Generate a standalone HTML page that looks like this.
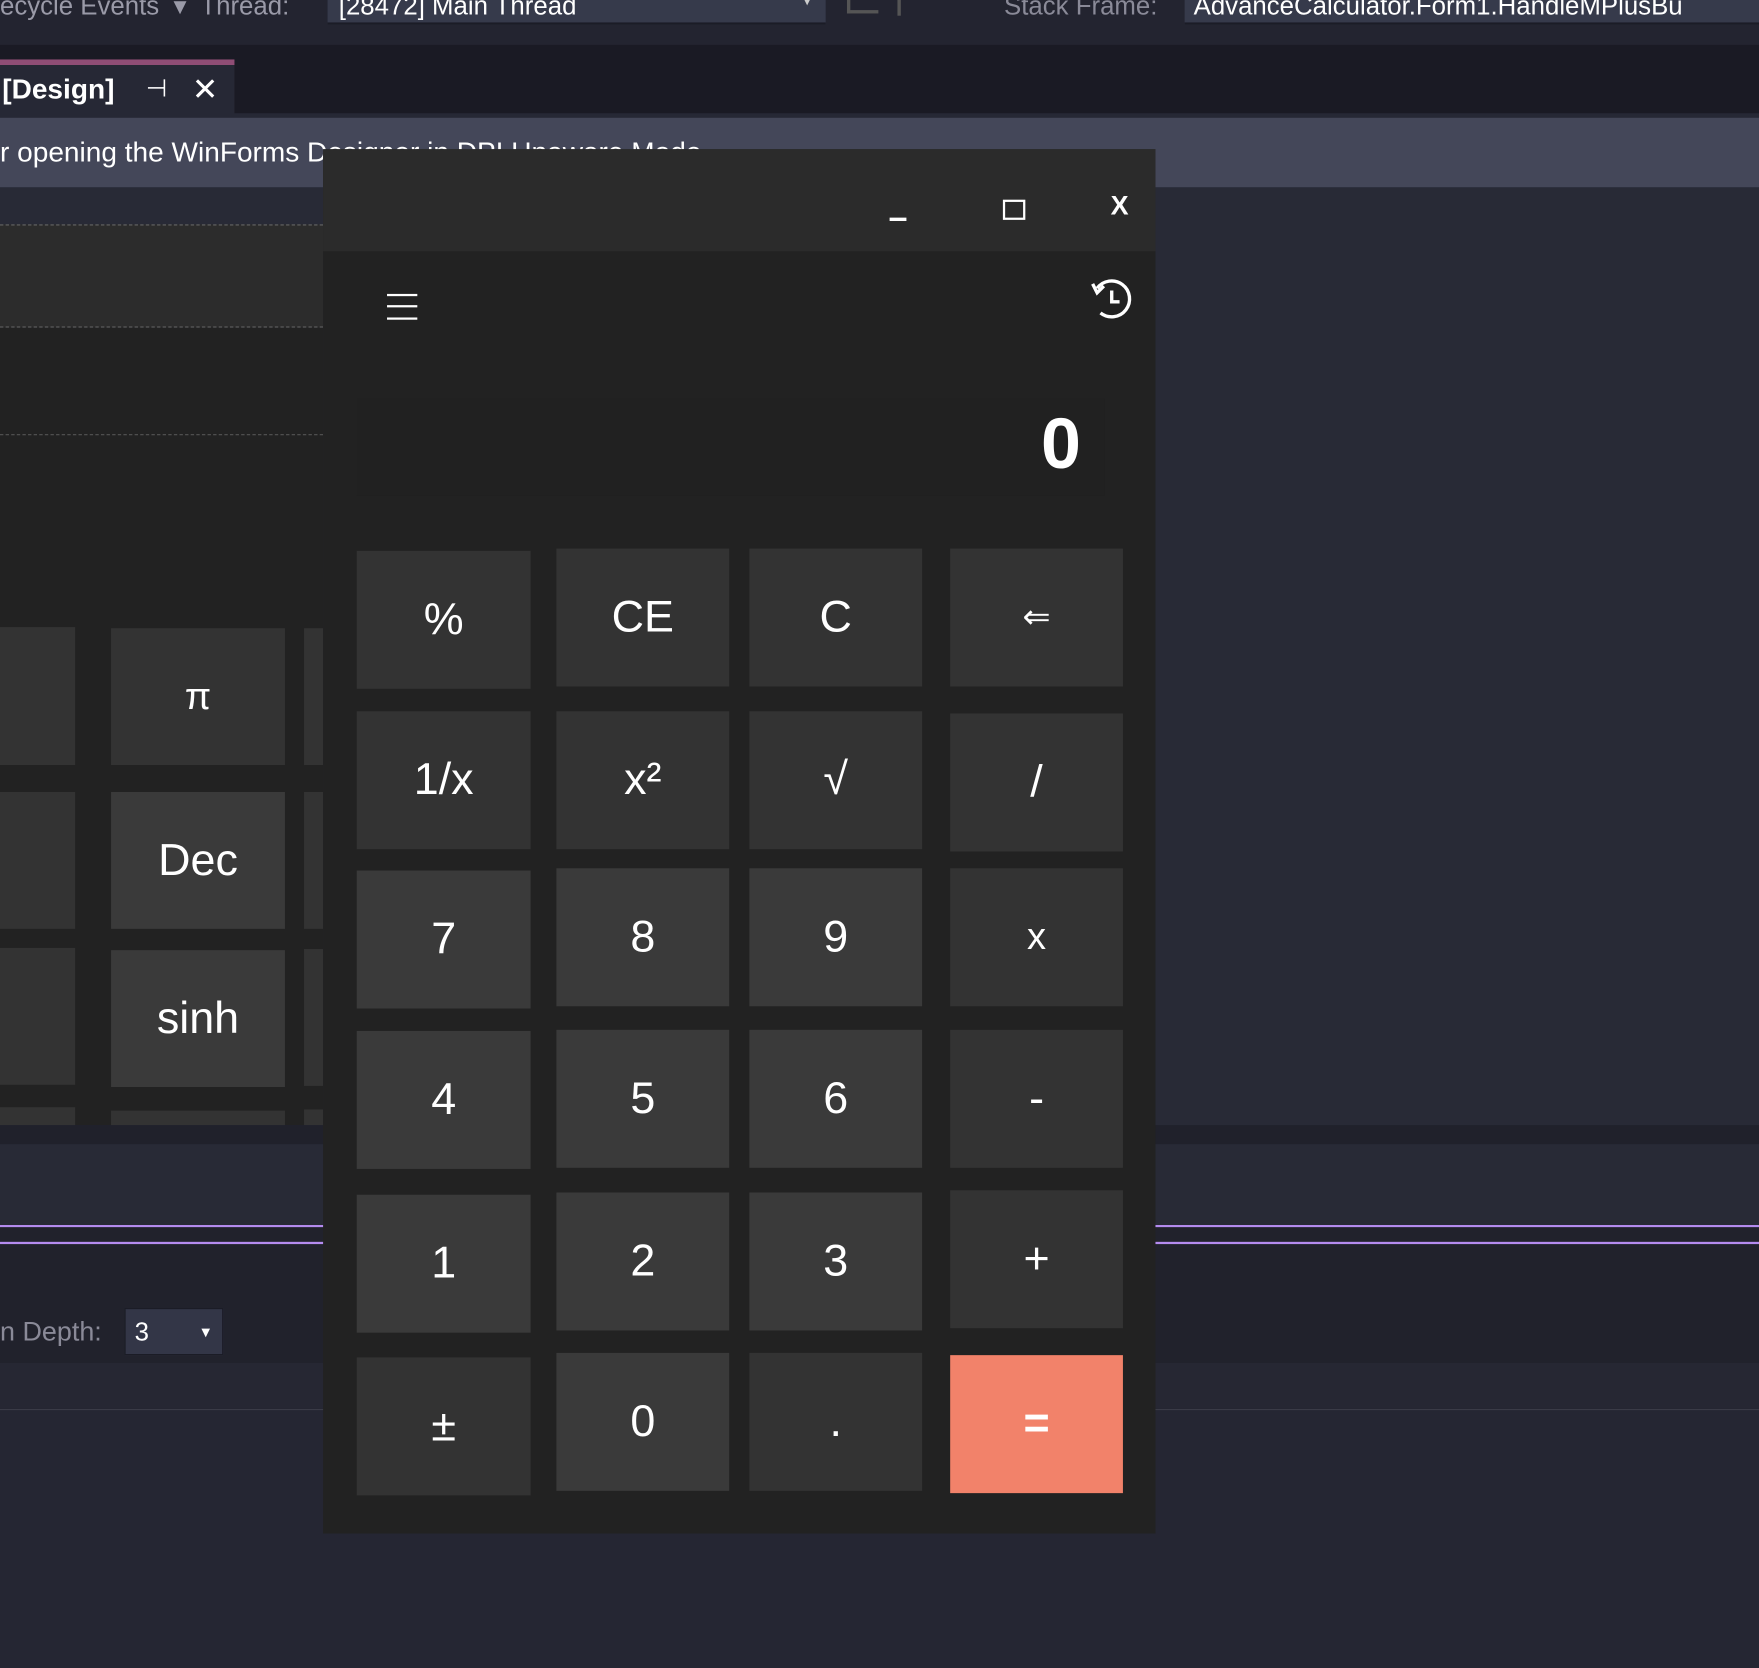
<!DOCTYPE html>
<html><head><meta charset="utf-8"><style>
*{margin:0;padding:0;box-sizing:border-box}
html,body{width:1759px;height:1668px;overflow:hidden;background:#252633}
#s{position:absolute;left:0;top:0;width:1568px;height:1487px;transform:scale(1.12181);transform-origin:0 0;font-family:"Liberation Sans",sans-serif;overflow:hidden;background:#252633}
.a{position:absolute}
.b{position:absolute;display:flex;align-items:center;justify-content:center;color:#fff;font-size:40px;background:#333}
.d{background:#3a3a3a}
</style></head><body><div id="s">
<!-- toolbar -->
<div class="a" style="left:0;top:0;width:1568px;height:40px;background:#232430"></div>
<div class="a" style="left:0;top:-8px;color:#9a9aa8;font-size:23px">ecycle Events &nbsp;▾&nbsp; Thread:</div>
<div class="a" style="left:292px;top:0;width:444px;height:22px;background:#363a4b;border-bottom:2px solid #1b1c26"></div>
<div class="a" style="left:302px;top:-8px;color:#fff;font-size:23px">[28472] Main Thread</div>
<div class="a" style="left:716px;top:-8px;color:#ccc;font-size:14px">▾</div>
<div class="a" style="left:755px;top:0;width:28px;height:12px;border-left:3px solid #555;border-bottom:3px solid #555"></div>
<div class="a" style="left:800px;top:0;width:28px;height:14px;border-left:3px solid #555"></div>
<div class="a" style="left:895px;top:-8px;color:#8a8a98;font-size:23px">Stack Frame:</div>
<div class="a" style="left:1056px;top:0;width:512px;height:22px;background:#363a4b;border-bottom:2px solid #1b1c26"></div>
<div class="a" style="left:1064px;top:-8px;color:#fff;font-size:23px;white-space:nowrap">AdvanceCalculator.Form1.HandleMPlusBu</div>
<!-- tab strip -->
<div class="a" style="left:0;top:40px;width:1568px;height:61px;background:#1a1a24"></div>
<div class="a" style="left:0;top:53px;width:209px;height:5px;background:#8f4d75"></div>
<div class="a" style="left:0;top:58px;width:209px;height:47px;background:#262835"></div>
<div class="a" style="left:2px;top:66px;color:#fff;font-size:25px;font-weight:bold">[Design]</div>
<div class="a" style="left:130px;top:66px;color:#fff;font-size:22px">⊣</div>
<div class="a" style="left:171px;top:63px;color:#fff;font-size:28px">✕</div>
<div class="a" style="left:0;top:101px;width:1568px;height:4px;background:#262835"></div>
<!-- info bar -->
<div class="a" style="left:0;top:105px;width:1568px;height:62px;background:#444759"></div>
<div class="a" style="left:0;top:122px;color:#fff;font-size:25px;white-space:nowrap">r opening the WinForms Designer in DPI Unaware Mode...</div>
<!-- main -->
<div class="a" style="left:0;top:167px;width:1568px;height:836px;background:#282a36"></div>
<div class="a" style="left:0;top:200px;width:288px;height:92px;background:#2c2c2c;border-top:1px dashed #666;border-bottom:1px dashed #666"></div>
<div class="a" style="left:0;top:292px;width:288px;height:711px;background:#222"></div>
<div class="a" style="left:0;top:387px;width:288px;height:1px;border-top:1px dashed #555"></div>
<div class="b" style="left:0;top:559px;width:67px;height:123px"></div>
<div class="b" style="left:99px;top:560px;width:155px;height:122px;font-size:34px">π</div>
<div class="b" style="left:271px;top:560px;width:17px;height:122px"></div>
<div class="b" style="left:0;top:706px;width:67px;height:122px"></div>
<div class="b d" style="left:99px;top:706px;width:155px;height:122px">Dec</div>
<div class="b" style="left:271px;top:706px;width:17px;height:122px"></div>
<div class="b" style="left:0;top:845px;width:67px;height:122px"></div>
<div class="b d" style="left:99px;top:847px;width:155px;height:122px">sinh</div>
<div class="b" style="left:271px;top:846px;width:17px;height:122px"></div>
<div class="b" style="left:0;top:987px;width:67px;height:16px"></div>
<div class="b" style="left:99px;top:990px;width:155px;height:13px"></div>
<div class="b" style="left:271px;top:989px;width:17px;height:14px"></div>
<div class="a" style="left:0;top:1003px;width:1568px;height:17px;background:#20212b"></div>
<div class="a" style="left:0;top:1020px;width:1568px;height:72px;background:#282a36"></div>
<div class="a" style="left:0;top:1092px;width:1568px;height:2px;background:#b58cf0"></div>
<div class="a" style="left:0;top:1094px;width:1568px;height:121px;background:#21222c"></div>
<div class="a" style="left:0;top:1107px;width:1568px;height:2px;background:#b58cf0"></div>
<div class="a" style="left:0;top:1174px;color:#8a8a98;font-size:24px">n Depth:</div>
<div class="a" style="left:111px;top:1166px;width:88px;height:42px;background:#333647;border:1px solid #1b1c26"></div>
<div class="a" style="left:120px;top:1174px;color:#fff;font-size:23px">3</div>
<div class="a" style="left:177px;top:1180px;color:#fff;font-size:13px">▼</div>
<div class="a" style="left:0;top:1215px;width:1568px;height:41px;background:#262733"></div>
<div class="a" style="left:0;top:1256px;width:1568px;height:1px;background:#3a3b47"></div>
<!-- calculator -->
<div class="a" style="left:288px;top:133px;width:742px;height:1234px;background:#222"></div>
<div class="a" style="left:288px;top:133px;width:742px;height:91px;background:#2b2b2b"></div>
<div class="a" style="left:793px;top:194px;width:15px;height:3px;background:#fff"></div>
<div class="a" style="left:894px;top:178px;width:20px;height:18px;border:2px solid #fff"></div>
<div class="a" style="left:990px;top:170px;color:#fff;font-size:24px;font-weight:bold">X</div>
<div class="a" style="left:345px;top:262px;width:27px;height:2px;background:#fff;box-shadow:0 10px 0 #fff,0 21px 0 #fff"></div>
<svg class="a" style="left:970px;top:248px" width="42" height="42" viewBox="0 0 42 42"><path d="M8 9 A16 16 0 1 1 11 31" fill="none" stroke="#fff" stroke-width="3"/><path d="M4 5 L8 13 L14 7" fill="none" stroke="#fff" stroke-width="3"/><path d="M21 11 V21 H28" fill="none" stroke="#fff" stroke-width="3"/></svg>
<div class="a" style="left:318px;top:355px;width:667px;height:87px;background:#212121"></div>
<div class="a" style="left:928px;top:358px;color:#fff;font-size:64px;font-weight:bold">0</div>
<div class="b" style="left:318px;top:491px;width:155px;height:123px">%</div>
<div class="b" style="left:496px;top:489px;width:154px;height:123px">CE</div>
<div class="b" style="left:668px;top:489px;width:154px;height:123px">C</div>
<div class="b" style="left:847px;top:489px;width:154px;height:123px;font-size:30px">⇐</div>
<div class="b" style="left:318px;top:634px;width:155px;height:123px">1/x</div>
<div class="b" style="left:496px;top:634px;width:154px;height:123px">x²</div>
<div class="b" style="left:668px;top:634px;width:154px;height:123px">√</div>
<div class="b" style="left:847px;top:636px;width:154px;height:123px">/</div>
<div class="b d" style="left:318px;top:776px;width:155px;height:123px">7</div>
<div class="b d" style="left:496px;top:774px;width:154px;height:123px">8</div>
<div class="b d" style="left:668px;top:774px;width:154px;height:123px">9</div>
<div class="b" style="left:847px;top:774px;width:154px;height:123px;font-size:34px">x</div>
<div class="b d" style="left:318px;top:919px;width:155px;height:123px">4</div>
<div class="b d" style="left:496px;top:918px;width:154px;height:123px">5</div>
<div class="b d" style="left:668px;top:918px;width:154px;height:123px">6</div>
<div class="b" style="left:847px;top:918px;width:154px;height:123px">-</div>
<div class="b d" style="left:318px;top:1065px;width:155px;height:123px">1</div>
<div class="b d" style="left:496px;top:1063px;width:154px;height:123px">2</div>
<div class="b d" style="left:668px;top:1063px;width:154px;height:123px">3</div>
<div class="b" style="left:847px;top:1061px;width:154px;height:123px">+</div>
<div class="b" style="left:318px;top:1210px;width:155px;height:123px">±</div>
<div class="b d" style="left:496px;top:1206px;width:154px;height:123px">0</div>
<div class="b" style="left:668px;top:1206px;width:154px;height:123px">.</div>
<div class="b" style="left:847px;top:1208px;width:154px;height:123px;background:#f2826a;font-weight:bold">=</div>
</div></body></html>
